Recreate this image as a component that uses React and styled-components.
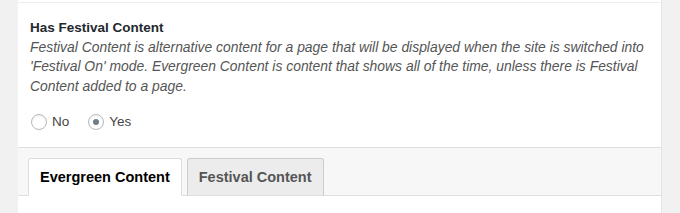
import React, { useState } from 'react';
import styled, { createGlobalStyle } from 'styled-components';

const Global = createGlobalStyle`
	html, body {
		margin: 0;
		padding: 0;
		background: #f1f1f1;
	}
	body {
		font-family: "Liberation Sans", Arial, sans-serif;
		color: #23282d;
	}
`;

const Page = styled.div`
	display: flex;
	padding: 0 18px;
`;

const Panel = styled.div`
	flex: 1;
	background: #fff;
	border-right: 1px solid #e5e5e5;
	padding-top: 2px;
`;

const Field = styled.div`
	border-top: 1px solid #eee;
	padding: 15px 12px 15px 12px;
`;

const Heading = styled.div`
	font-size: 13.5px;
	font-weight: bold;
	line-height: 19px;
	color: #23282d;
`;

const Description = styled.p`
	margin: 1px 0 0;
	font-size: 13.9px;
	font-style: italic;
	line-height: 19.3px;
	color: #555;
	max-width: 622px;
`;

const RadioRow = styled.div`
	display: flex;
	align-items: center;
	gap: 19px;
	margin-top: 16px;
	padding-left: 1px;
	height: 20px;
`;

const RadioLabel = styled.label`
	display: flex;
	align-items: center;
	gap: 5px;
	font-size: 13.5px;
	color: #444;
	cursor: pointer;
`;

const RadioCircle = styled.span`
	box-sizing: border-box;
	width: 16px;
	height: 16px;
	border-radius: 50%;
	border: 1px solid #b4b9be;
	background: #fff;
	box-shadow: inset 0 1px 2px rgba(0, 0, 0, 0.07);
	display: flex;
	align-items: center;
	justify-content: center;

	&::after {
		content: '';
		width: 6px;
		height: 6px;
		border-radius: 50%;
		background: ${(props) => (props.checked ? '#6f7c87' : 'transparent')};
	}
`;

const TabBar = styled.div`
	display: flex;
	gap: 5px;
	padding: 10px 0 0 10px;
	background: #f7f7f7;
	border-top: 1px solid #dfdfdf;
	border-bottom: 1px solid #dfdfdf;
`;

const Tab = styled.button`
	box-sizing: border-box;
	height: 38px;
	margin-bottom: -1px;
	padding: 0 11px 0 11px;
	font-family: "Liberation Sans", Arial, sans-serif;
	font-size: 14.5px;
	font-weight: bold;
	border: 1px solid ${(props) => (props.active ? '#ddd' : '#ccc')};
	border-bottom-color: ${(props) => (props.active ? '#fff' : '#dfdfdf')};
	border-radius: 3px 3px 0 0;
	background: ${(props) => (props.active ? '#fff' : '#ececec')};
	color: ${(props) => (props.active ? '#000' : '#555')};
	cursor: pointer;
`;

const Body = styled.div`
	height: 20px;
`;

export default function App() {
	const [festival, setFestival] = useState(true);
	const [tab, setTab] = useState('evergreen');

	return (
		<>
			<Global />
			<Page>
				<Panel>
					<Field>
						<Heading>Has Festival Content</Heading>
						<Description>
							Festival Content is alternative content for a page that will be displayed when the site is switched into 'Festival On' mode. Evergreen Content is content that shows all of the time, unless there is Festival Content added to a page.
						</Description>
						<RadioRow>
							<RadioLabel onClick={() => setFestival(false)}>
								<RadioCircle checked={!festival} />
								No
							</RadioLabel>
							<RadioLabel onClick={() => setFestival(true)}>
								<RadioCircle checked={festival} />
								Yes
							</RadioLabel>
						</RadioRow>
					</Field>
					<TabBar>
						<Tab active={tab === 'evergreen'} onClick={() => setTab('evergreen')}>
							Evergreen Content
						</Tab>
						<Tab active={tab === 'festival'} onClick={() => setTab('festival')}>
							Festival Content
						</Tab>
					</TabBar>
					<Body />
				</Panel>
			</Page>
		</>
	);
}
